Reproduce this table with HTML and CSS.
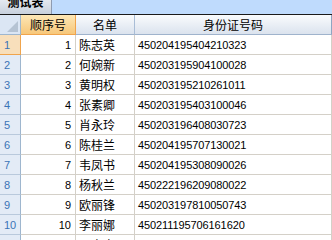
FILE: index.html
```html
<!DOCTYPE html>
<html>
<head>
<meta charset="utf-8">
<link rel="stylesheet" href="styles.css">
</head>
<body>
<div class="tabbar">
  <div class="tab"><span class="tab-label">测试表</span></div>
</div>
<div class="grid">
  <div class="corner"><span class="tri"></span></div>
  <div class="hcell sel">顺序号</div>
  <div class="hcell">名单</div>
  <div class="hcell last">身份证号码</div>

  <div class="rh sel">1</div><div class="c num">1</div><div class="c">陈志英</div><div class="c id">450204195404210323</div>
  <div class="rh">2</div><div class="c num">2</div><div class="c">何婉新</div><div class="c id">450203195904100028</div>
  <div class="rh">3</div><div class="c num">3</div><div class="c">黄明权</div><div class="c id">450203195210261011</div>
  <div class="rh">4</div><div class="c num">4</div><div class="c">张素卿</div><div class="c id">450203195403100046</div>
  <div class="rh">5</div><div class="c num">5</div><div class="c">肖永玲</div><div class="c id">450203196408030723</div>
  <div class="rh">6</div><div class="c num">6</div><div class="c">陈桂兰</div><div class="c id">450204195707130021</div>
  <div class="rh">7</div><div class="c num">7</div><div class="c">韦凤书</div><div class="c id">450204195308090026</div>
  <div class="rh">8</div><div class="c num">8</div><div class="c">杨秋兰</div><div class="c id">450222196209080022</div>
  <div class="rh">9</div><div class="c num">9</div><div class="c">欧丽锋</div><div class="c id">450203197810050743</div>
  <div class="rh">10</div><div class="c num">10</div><div class="c">李丽娜</div><div class="c id">450211195706161620</div>
  <div class="rh">11</div><div class="c num">11</div><div class="c">吕高宝</div><div class="c id">450203195612080015</div>
</div>
</body>
</html>
```
FILE: styles.css
```css
html, body {
  margin: 0;
  padding: 0;
  background: #ffffff;
  overflow: hidden;
}
body {
  width: 332px;
  height: 240px;
  font-family: "Noto Sans CJK SC", "Liberation Sans", sans-serif;
  font-size: 12px;
  color: #000;
}
.tabbar {
  height: 14px;
  background: #bfdbfd;
  border-bottom: 1px solid #1a1a1a;
  overflow: hidden;
  display: flex;
}
.tab {
  width: 51px;
  height: 14px;
  background: linear-gradient(#e4e9f0, #c8d1dd);
  border-right: 1px solid #8e9bb0;
  overflow: hidden;
  display: flex;
  justify-content: center;
}
.tab-label {
  display: block;
  font-weight: bold;
  font-size: 12px;
  line-height: 16px;
  margin-top: -6px;
  color: #000;
}
.grid {
  display: grid;
  grid-template-columns: 21px 55px 59px 197px;
  grid-auto-rows: 20px;
}
.corner {
  background: #dbe6f4;
  border-right: 1px solid #9eb6ce;
  border-bottom: 1px solid #9eb6ce;
  display: flex;
  align-items: flex-end;
  justify-content: flex-end;
  padding: 0 2px 2px 0;
}
.tri {
  width: 0;
  height: 0;
  border-left: 11px solid transparent;
  border-bottom: 11px solid #b5c3d3;
}
.hcell {
  background: linear-gradient(#f9fbfd, #dbe3ee);
  border-right: 1px solid #a9bdd6;
  border-bottom: 1px solid #9fb3cc;
  display: flex;
  align-items: center;
  justify-content: center;
  font-size: 12px;
  line-height: 20px;
}
.hcell.sel {
  background: linear-gradient(#fde7b6, #f7c77a);
  border-right: 1px solid #f0a44c;
  border-bottom: 1px solid #f0a44c;
}
.hcell.last {
  border-right: 1px solid #8fa6c2;
}
.rh {
  background: #e3ebf6;
  border-right: 1px solid #9eb6ce;
  border-bottom: 1px solid #b9c9dc;
  color: #3b74b6;
  font-family: "Liberation Sans", sans-serif;
  font-size: 11px;
  display: flex;
  align-items: center;
  padding-left: 4px;
}
.rh.sel {
  background: #f8dfbb;
  border-right: 1px solid #f0a44c;
  border-bottom: 1px solid #f0a44c;
}
.c {
  border-right: 1px solid #d4d0c8;
  border-bottom: 1px solid #d4d0c8;
  display: flex;
  align-items: center;
  padding-left: 3px;
  white-space: nowrap;
  overflow: hidden;
}
.c.num {
  justify-content: flex-end;
  padding: 0 4px 0 0;
  font-family: "Liberation Sans", sans-serif;
  font-size: 11px;
}
.c.id {
  font-family: "Liberation Sans", sans-serif;
  font-size: 11px;
  letter-spacing: -0.1px;
  padding-left: 3px;
}
```
